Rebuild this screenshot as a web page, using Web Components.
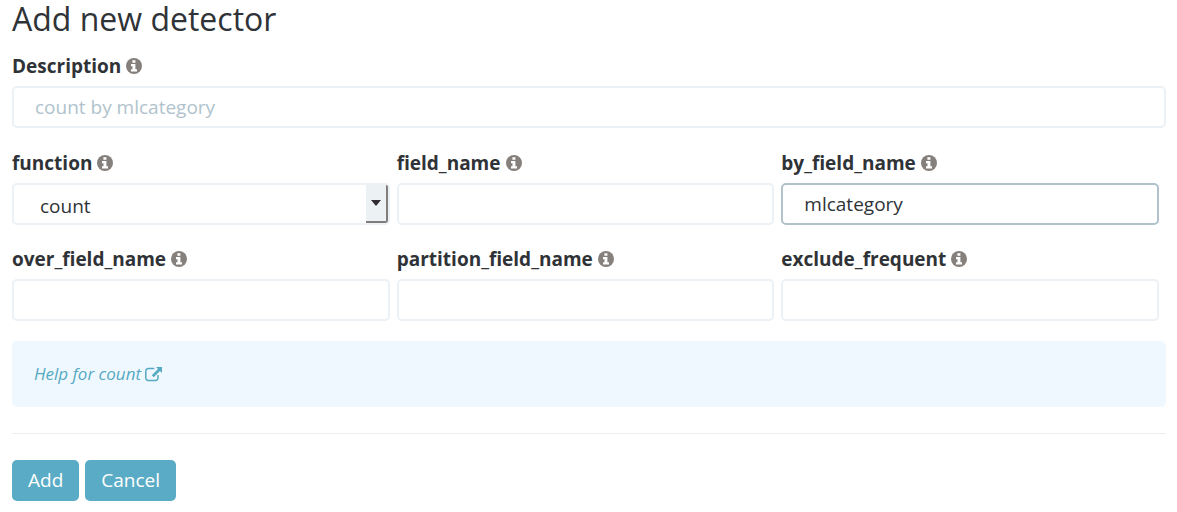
<!DOCTYPE html>
<html lang="en">
<head>
<meta charset="utf-8">
<title>Add new detector</title>
<style>
  body { margin: 0; background: #fff; color: #2f3337; font-family: "Open Sans", "Noto Sans", sans-serif; font-size: 19px; }
</style>
</head>
<body>
<detector-editor></detector-editor>

<template id="info-icon">
  <style>
    :host { display: inline-flex; }
    svg { display: block; width: 16px; height: 16px; }
  </style>
  <svg viewBox="0 0 16 16" aria-hidden="true">
    <circle cx="8" cy="8" r="8" fill="#86807c"/>
    <path d="M6.400 2.200h3v2.500h-3zM5 6h4.400v5.200H11v2.200H5v-2.200h1.500V8.200H5z" fill="#fff"/>
  </svg>
</template>

<template id="detector-field">
  <style>
    :host { display: block; min-width: 0; }
    .head { display: flex; align-items: center; gap: 5px; height: 28px; margin-bottom: 6px; }
    label { font-weight: 700; font-size: 19px; line-height: 28px; }
    .box { position: relative; }
    input, select {
      display: block; box-sizing: border-box; width: 100%; height: 42px; margin: 0; padding: 0 21px;
      border: 2px solid #ebf1f5; border-radius: 5px; background: #fff; color: inherit;
      font-family: inherit; font-size: 19px; outline: none;
    }
    input::placeholder { color: #b0c3cd; opacity: 1; }
    :host([active]) input, input:focus { border-color: #b2c2cd; }
    select { appearance: none; padding: 4px 26px 0; }
    .arrow {
      position: absolute; top: 2px; right: 2px; bottom: 2px; width: 22px; box-sizing: border-box;
      display: flex; align-items: center; justify-content: center; pointer-events: none;
      background: #ecf1f3; border-right: 2px solid #817d7c; border-bottom: 2px solid #817d7c; border-radius: 0 2px 3px 0;
    }
    .arrow svg { width: 10px; height: 6px; }
  </style>
  <div class="head"><label for="control"></label><info-icon></info-icon></div>
  <div class="box"></div>
</template>

<template id="help-panel">
  <style>
    :host { display: flex; align-items: center; box-sizing: border-box; height: 66px; padding: 0 22px; border-radius: 5px; background: #eff8ff; }
    a { display: flex; align-items: center; gap: 4px; color: #56a9c2; font-size: 17px; line-height: 24px; font-style: italic; text-decoration: none; }
    svg { width: 17px; height: 15px; }
  </style>
  <a href="#help"><slot></slot>
    <svg viewBox="0 0 17 15" aria-hidden="true">
      <path d="M9.300 1.500H3.200A2.400 2.400 0 0 0 .8 3.900v7.200A2.400 2.400 0 0 0 3.200 13.500h7.400a2.400 2.400 0 0 0 2.400-2.400V8" fill="none" stroke="#56a9c2" stroke-width="1.500"/>
      <path d="M11 0h6v6l-2-2-6.300 6.200-1.900-1.900L13 2z" fill="#56a9c2"/>
    </svg>
  </a>
</template>

<template id="action-button">
  <style>
    :host { display: block; }
    button { display: block; height: 41px; margin: 0; padding: 0 16px; border: 0; border-radius: 5px; background: #5aacc6; color: #fff; font-family: inherit; font-size: 19px; line-height: 41px; cursor: pointer; }
  </style>
  <button type="button"><slot></slot></button>
</template>

<template id="detector-editor">
  <style>
    :host { display: block; padding: 0 11px 11px 12px; }
    h1 { margin: 0 0 14px; font-size: 32px; line-height: 38px; font-weight: 400; }
    .grid { display: grid; grid-template-columns: repeat(3, 1fr); column-gap: 7px; row-gap: 20px; margin: 21px 7px 20px 0; }
    hr { margin: 26px 0; border: 0; border-top: 1px solid #eeeeee; }
    .actions { display: flex; gap: 6px; }
  </style>
  <h1>Add new detector</h1>
  <detector-field name="Description" placeholder="count by mlcategory"></detector-field>
  <div class="grid">
    <detector-field name="function" options="count,high_count,low_count,mean,sum"></detector-field>
    <detector-field name="field_name"></detector-field>
    <detector-field name="by_field_name" value="mlcategory" active></detector-field>
    <detector-field name="over_field_name"></detector-field>
    <detector-field name="partition_field_name"></detector-field>
    <detector-field name="exclude_frequent"></detector-field>
  </div>
  <help-panel>Help for count</help-panel>
  <hr>
  <div class="actions">
    <action-button>Add</action-button>
    <action-button>Cancel</action-button>
  </div>
</template>

<script>
  class TemplateElement extends HTMLElement {
    constructor() {
      super();
      this.attachShadow({ mode: "open" });
      this.shadowRoot.append(document.getElementById(this.localName).content.cloneNode(true));
    }
  }

  class DetectorField extends TemplateElement {
    connectedCallback() {
      const root = this.shadowRoot;
      root.querySelector("label").textContent = this.getAttribute("name");
      const box = root.querySelector(".box");
      if (box.firstChild) return;
      const options = this.getAttribute("options");
      const control = document.createElement(options ? "select" : "input");
      control.id = "control";
      if (options) {
        for (const name of options.split(",")) control.add(new Option(name));
      } else {
        control.type = "text";
        control.placeholder = this.getAttribute("placeholder") || "";
        control.value = this.getAttribute("value") || "";
      }
      box.append(control);
      if (options) {
        box.insertAdjacentHTML("beforeend",
          '<span class="arrow" aria-hidden="true"><svg viewBox="0 0 10 6"><path d="M0 0h10L5 6z" fill="#302d2e"/></svg></span>');
      }
    }
  }

  customElements.define("info-icon", class extends TemplateElement {});
  customElements.define("detector-field", DetectorField);
  customElements.define("help-panel", class extends TemplateElement {});
  customElements.define("action-button", class extends TemplateElement {});
  customElements.define("detector-editor", class extends TemplateElement {});
</script>
</body>
</html>
